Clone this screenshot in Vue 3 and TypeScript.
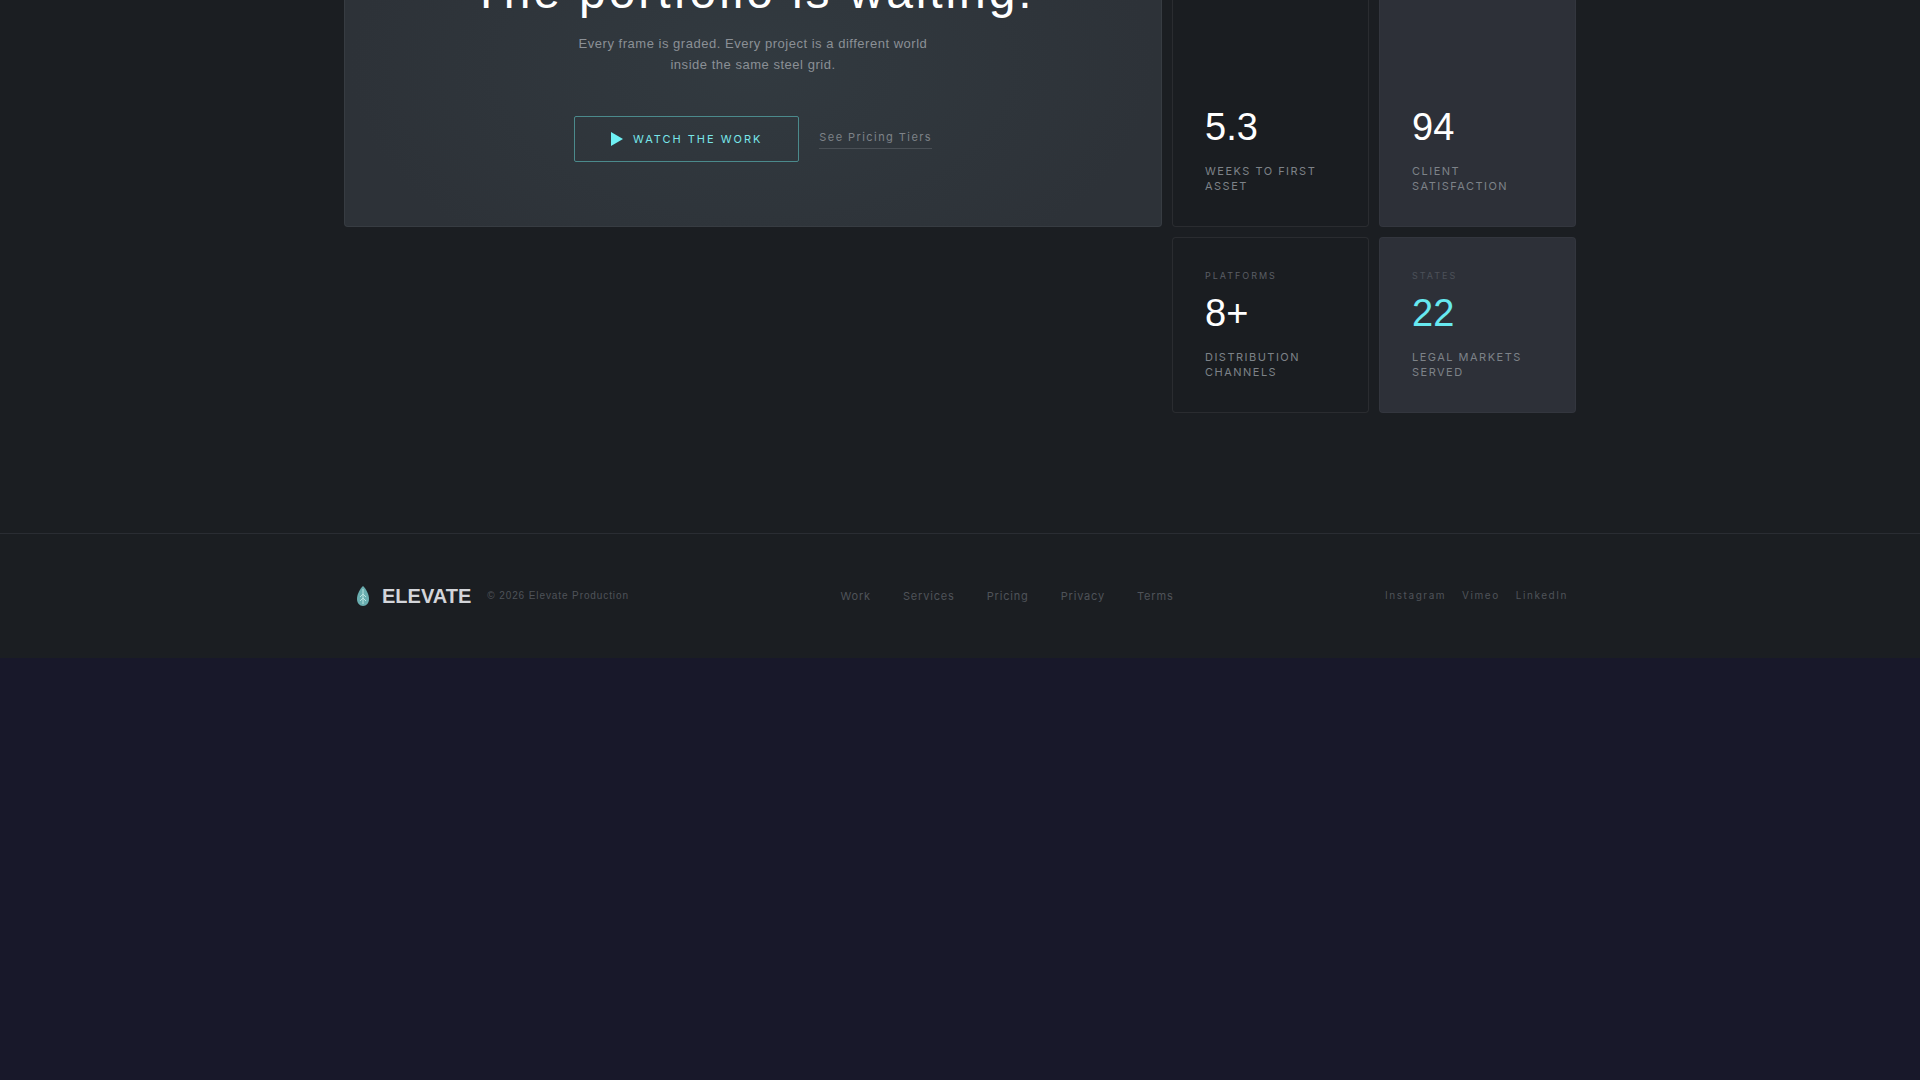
<script setup lang="ts">
const footerLinks = ['Work', 'Services', 'Pricing', 'Privacy', 'Terms'];
const socials = ['Instagram', 'Vimeo', 'LinkedIn'];
</script>

<template>
  <div class="page">
    <section class="cta">
      <div class="bento">
        <div class="hero">
          <h2 class="hero-title">The portfolio is waiting.</h2>
          <p class="hero-sub">Every frame is graded. Every project is a different world<br />inside the same steel grid.</p>
          <div class="hero-actions">
            <a class="btn-watch">
              <svg class="play" width="12" height="14" viewBox="0 0 12 14"><path d="M0 0L12 7L0 14Z" fill="#6ff1f5" /></svg>
              WATCH THE WORK
            </a>
            <a class="link-pricing">See Pricing Tiers</a>
          </div>
        </div>
        <div class="stat tall">
          <div class="stat-value">5.3</div>
          <div class="stat-label">Weeks to first asset</div>
        </div>
        <div class="stat tall lit">
          <div class="stat-value">94</div>
          <div class="stat-label">Client satisfaction</div>
        </div>
        <div class="stat small-start">
          <div class="stat-kicker">Platforms</div>
          <div class="stat-value">8+</div>
          <div class="stat-label">Distribution channels</div>
        </div>
        <div class="stat lit">
          <div class="stat-kicker dim">States</div>
          <div class="stat-value cyan">22</div>
          <div class="stat-label">Legal markets served</div>
        </div>
      </div>
    </section>
    <footer class="footer">
      <div class="footer-inner">
        <div class="brand">
          <svg class="logo" width="22" height="24" viewBox="0 0 22 24">
            <path d="M11 2C8.500 4.500 5 9.500 5 15C5 19 7.500 22 11 22C14.500 22 17 19 17 15C17 9.500 13.500 4.500 11 2Z" fill="#6aaeb0" />
            <path d="M11 5V20M11 10L8 13M11 10L14 13M11 14L8 17M11 14L14 17" stroke="#b9e4e0" stroke-width="1" fill="none" />
          </svg>
          <span class="brand-name">ELEVATE</span>
          <span class="copy">© 2026 Elevate Production</span>
        </div>
        <nav class="foot-nav">
          <a v-for="l in footerLinks" :key="l">{{ l }}</a>
        </nav>
        <div class="socials">
          <a v-for="s in socials" :key="s">{{ s }}</a>
        </div>
      </div>
    </footer>
  </div>
</template>

<style>
body {
  background: #18182a;
}
</style>

<style scoped>
.page {
  height: 658px;
  overflow: hidden;
  display: flex;
  flex-direction: column;
  font-family: 'Liberation Sans', Arial, sans-serif;
  background: #1b1e22;
}
.cta {
  flex: 1;
  min-height: 0;
  display: flex;
  flex-direction: column;
  justify-content: flex-end;
  align-items: center;
  padding-bottom: 120px;
}
.bento {
  width: 1232px;
  flex-shrink: 0;
  display: grid;
  grid-template-columns: 818px 197px 197px;
  grid-template-rows: 400px 176px;
  gap: 10px;
}
.hero {
  box-sizing: border-box;
  border: 1px solid rgba(255, 255, 255, 0.05);
  border-radius: 4px;
  background: radial-gradient(ellipse at 50% 60%, #323a40 0%, #2d3238 70%);
  padding-bottom: 64px;
  display: flex;
  flex-direction: column;
  justify-content: flex-end;
  align-items: center;
  text-align: center;
}
.hero-title {
  margin: 0 0 14px;
  font-size: 48px;
  font-weight: 400;
  letter-spacing: 0.06em;
  line-height: 1.1;
  color: #fff;
}
.hero-sub {
  margin: 0 0 41px;
  font-size: 13px;
  line-height: 21px;
  letter-spacing: 0.04em;
  color: #8b9096;
}
.hero-actions {
  display: flex;
  align-items: center;
  gap: 20px;
}
.btn-watch {
  display: flex;
  align-items: center;
  gap: 10px;
  height: 46px;
  box-sizing: border-box;
  padding: 0 36px;
  border: 1px solid #4b8a8c;
  border-radius: 2px;
  font-family: Inter, 'Liberation Sans', sans-serif;
  font-size: 11px;
  letter-spacing: 0.18em;
  color: #78e6ea;
}
.link-pricing {
  padding-bottom: 4px;
  margin-top: 1px;
  border-bottom: 1px solid #4a5056;
  font-family: Inter, 'Liberation Sans', sans-serif;
  font-size: 11px;
  letter-spacing: 0.13em;
  color: #7d8288;
}
.stat {
  box-sizing: border-box;
  border: 1px solid rgba(255, 255, 255, 0.07);
  border-radius: 4px;
  background: #1a1d21;
  padding: 32px;
  display: flex;
  flex-direction: column;
  justify-content: flex-end;
}
.stat.lit {
  border-color: rgba(255, 255, 255, 0.03);
  background: #2d3038;
}
.stat.small-start {
  grid-column: 2;
}
.stat-kicker {
  margin-bottom: 8px;
  font-family: Inter, 'Liberation Sans', sans-serif;
  font-size: 9px;
  line-height: 14px;
  letter-spacing: 0.22em;
  text-transform: uppercase;
  color: #5a5e64;
}
.stat-kicker.dim {
  color: #4c5058;
}
.stat-value {
  margin-bottom: 15px;
  font-size: 38px;
  line-height: 44px;
  color: #fff;
}
.stat-value.cyan {
  color: #67e8f0;
}
.stat-label {
  font-family: Inter, 'Liberation Sans', sans-serif;
  font-size: 11px;
  line-height: 15px;
  letter-spacing: 0.135em;
  text-transform: uppercase;
  color: #7d8288;
}
.footer {
  border-top: 1px solid #2a2d33;
  height: 125px;
  box-sizing: border-box;
  flex-shrink: 0;
  display: flex;
  justify-content: center;
  align-items: center;
}
.footer-inner {
  width: 1216px;
  display: flex;
  justify-content: space-between;
  align-items: center;
}
.brand {
  display: flex;
  align-items: center;
}
.logo {
  margin-right: 8px;
}
.brand-name {
  font-size: 20px;
  font-weight: 700;
  color: #d3d5da;
  margin-right: 16px;
}
.copy {
  margin-bottom: 2px;
  font-size: 10px;
  letter-spacing: 0.09em;
  color: #4f5359;
}
.foot-nav {
  display: flex;
  gap: 32px;
  font-family: Inter, 'Liberation Sans', sans-serif;
  font-size: 11px;
  letter-spacing: 0.075em;
  color: #4f5359;
}
.socials {
  display: flex;
  gap: 16px;
  margin-bottom: 2px;
  font-family: Inter, 'Liberation Sans', sans-serif;
  font-size: 10px;
  letter-spacing: 0.155em;
  color: #4f5359;
}
</style>
